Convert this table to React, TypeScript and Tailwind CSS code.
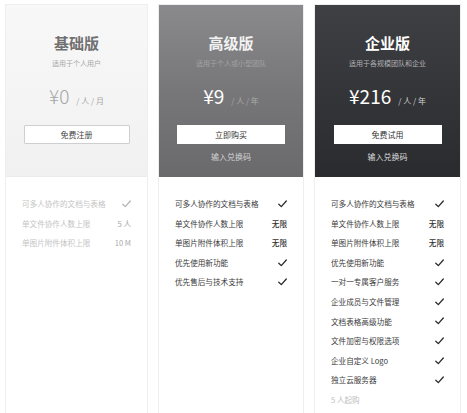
import React from "react";

type Feature = { label: string; value?: string };

const Check = ({ color }: { color: string }) => (
  <svg width="9" height="8" viewBox="0 0 9 8" className="inline-block">
    <polyline points="0.8,4.2 3.3,6.6 8.3,1" fill="none" stroke={color} strokeWidth="1.3" strokeLinecap="round" strokeLinejoin="round" />
  </svg>
);

const font = "font-['Noto_Sans_CJK_SC','Noto_Sans',sans-serif]";

function FeatureList({ items, faded, footer }: { items: Feature[]; faded?: boolean; footer?: string }) {
  return (
    <div className="pt-[17px] px-[16px]">
      {items.map((f, i) => (
        <div key={i} className="flex items-center justify-between h-[19.6px]">
          <span className={`text-[7.6px] ${faded ? "text-[#c4c4c4]" : "text-[#3a3a3a]"}`}>{f.label}</span>
          {f.value ? (
            <span className={`text-[7.6px] ${faded ? "text-[#a8a8a8]" : "text-[#333] font-medium"}`}>{f.value}</span>
          ) : (
            <Check color={faded ? "#b5b5b5" : "#2a2a2a"} />
          )}
        </div>
      ))}
      {footer && (
        <div className="flex items-center h-[19.6px] text-[7.6px] text-[#c0c0c0]">{footer}</div>
      )}
    </div>
  );
}

export default function App() {
  return (
    <div className={`w-[467px] h-[413px] bg-white overflow-hidden ${font}`}>
      <div className="grid grid-cols-[143px_146px_147px] gap-[10px] pl-[5px] pt-[4px]">
        {/* Card 1 */}
        <div className="h-[420px] border border-[#eeeeee] bg-white">
          <div className="h-[172px] bg-gradient-to-b from-[#f8f8f8] to-[#f1f1f1] flex flex-col items-center border-b border-[#ececec]">
            <div className="mt-[28px] h-[20px] leading-[20px] text-[15px] font-bold text-[#707070]">基础版</div>
            <div className="mt-[4px] h-[12px] leading-[12px] text-[7px] text-[#a8a8a8]">适用于个人用户</div>
            <div className="mt-[15px] h-[24px] flex items-baseline text-[#a5a5a5]">
              <span className="text-[19px] font-light leading-[24px]">¥0</span>
              <span className="text-[8px] ml-[7px]">/ 人 / 月</span>
            </div>
            <div className="mt-[17px] w-[106px] h-[19px] bg-white border border-[#cfcfcf] rounded-[1px] flex items-center justify-center text-[8px] text-[#444]">免费注册</div>
          </div>
          <FeatureList
            faded
            items={[
              { label: "可多人协作的文档与表格" },
              { label: "单文件协作人数上限", value: "5 人" },
              { label: "单图片附件体积上限", value: "10 M" },
            ]}
          />
        </div>

        {/* Card 2 */}
        <div className="h-[420px] border border-[#eeeeee] bg-white">
          <div className="h-[172px] bg-gradient-to-b from-[#8a8a8c] via-[#777779] to-[#6a6a6c] flex flex-col items-center">
            <div className="mt-[28px] h-[20px] leading-[20px] text-[15px] font-bold text-[#f2f2f2]">高级版</div>
            <div className="mt-[4px] h-[12px] leading-[12px] text-[7px] text-[#a2a2a4]">适用于个人或小型团队</div>
            <div className="mt-[15px] h-[24px] flex items-baseline text-white">
              <span className="text-[19px] leading-[24px]">¥9</span>
              <span className="text-[8px] ml-[7px] text-[#aaaaaa]">/ 人 / 年</span>
            </div>
            <div className="mt-[17px] w-[108px] h-[19px] bg-white flex items-center justify-center text-[8px] text-[#333]">立即购买</div>
            <div className="mt-[7px] h-[12px] leading-[12px] text-[8px] text-[#d2d2d2]">输入兑换码</div>
          </div>
          <FeatureList
            items={[
              { label: "可多人协作的文档与表格" },
              { label: "单文件协作人数上限", value: "无限" },
              { label: "单图片附件体积上限", value: "无限" },
              { label: "优先使用新功能" },
              { label: "优先售后与技术支持" },
            ]}
          />
        </div>

        {/* Card 3 */}
        <div className="h-[420px] border border-[#eeeeee] bg-white">
          <div className="h-[172px] bg-gradient-to-b from-[#3f4044] to-[#2a2b2f] flex flex-col items-center">
            <div className="mt-[28px] h-[20px] leading-[20px] text-[15px] font-bold text-white">企业版</div>
            <div className="mt-[4px] h-[12px] leading-[12px] text-[7px] text-[#b0b0b2]">适用于各规模团队和企业</div>
            <div className="mt-[15px] h-[24px] flex items-baseline text-white">
              <span className="text-[19px] leading-[24px]">¥216</span>
              <span className="text-[8px] ml-[7px] text-[#cfcfcf]">/ 人 / 年</span>
            </div>
            <div className="mt-[17px] w-[108px] h-[19px] bg-white flex items-center justify-center text-[8px] text-[#333]">免费试用</div>
            <div className="mt-[7px] h-[12px] leading-[12px] text-[8px] text-[#dcdcdc]">输入兑换码</div>
          </div>
          <FeatureList
            items={[
              { label: "可多人协作的文档与表格" },
              { label: "单文件协作人数上限", value: "无限" },
              { label: "单图片附件体积上限", value: "无限" },
              { label: "优先使用新功能" },
              { label: "一对一专属客户服务" },
              { label: "企业成员与文件管理" },
              { label: "文档表格高级功能" },
              { label: "文件加密与权限选项" },
              { label: "企业自定义 Logo" },
              { label: "独立云服务器" },
            ]}
            footer="5 人起购"
          />
        </div>
      </div>
    </div>
  );
}
